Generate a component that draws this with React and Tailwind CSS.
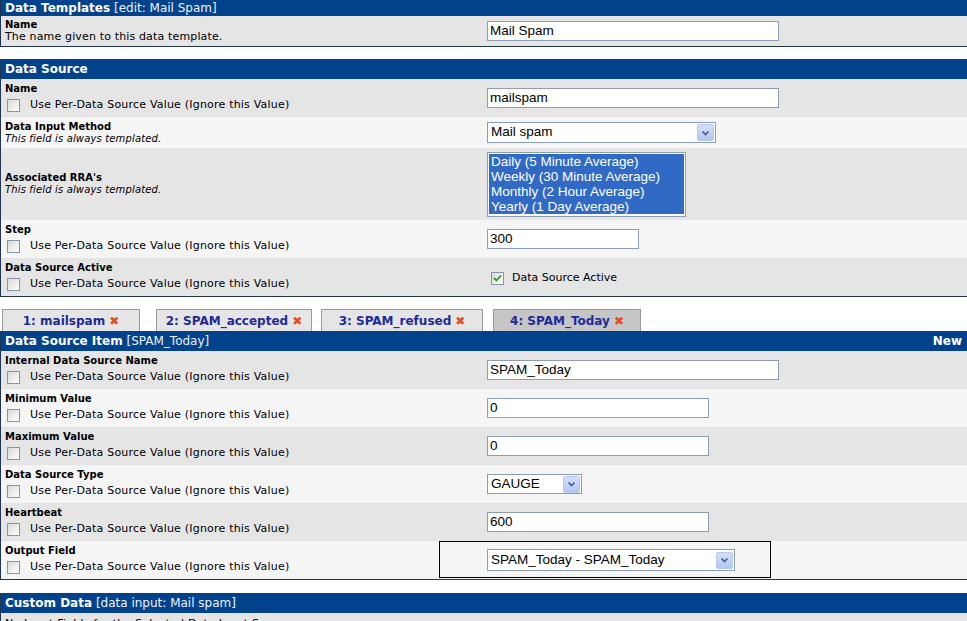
import React from "react";

// Form control font (Windows-ish sans) and label font (Verdana-like)
const CTRL = "font-['Liberation_Sans',Arial,sans-serif] text-[13.5px] text-black";

const Header = ({ title, note, right, tall = true }) => (
    <div className={`${tall ? "h-[20px]" : "h-[16px]"} bg-[#00438c] text-white flex items-center justify-between pl-[4px] pr-[5px] text-[12px] leading-none`}>
        <div className="whitespace-nowrap">
            <span className="font-bold">{title}</span>
            {note && <span className="text-[#eef2f8]"> {note}</span>}
        </div>
        {right && <span className="font-bold">{right}</span>}
    </div>
);

const Check = ({ checked }) => (
    <span className="w-[13px] h-[13px] shrink-0 border border-[#8595a6] bg-gradient-to-br from-[#d9d9d4] to-white flex items-center justify-center">
        {checked && (
            <svg width="9" height="8" viewBox="0 0 9 8">
                <path d="M1 4 L3.5 6.5 L8 1.5" stroke="#21a121" strokeWidth="1.8" fill="none" />
            </svg>
        )}
    </span>
);

const TextBox = ({ w, value }) => (
    <div className={`${w} h-[20px] border border-[#8c9eb5] bg-white flex items-center pl-[2px] ${CTRL}`}>
        {value}
    </div>
);

const Select = ({ w, h = "h-[21px]", value }) => (
    <div className={`${w} ${h} border border-[#8c9eb5] bg-white flex items-center pl-[3px] pr-[1px] ${CTRL}`}>
        <span className="flex-1 whitespace-nowrap">{value}</span>
        <span className="w-[17px] h-[17px] rounded-[2px] border border-[#b5c8f2] bg-gradient-to-b from-[#d3e0fb] to-[#b2c6f4] flex items-center justify-center">
            <svg width="9" height="6" viewBox="0 0 9 6">
                <path d="M1.5 1.5 L4.5 4.5 L7.5 1.5" stroke="#4a5f86" strokeWidth="1.7" fill="none" />
            </svg>
        </span>
    </div>
);

const PerDs = () => (
    <div className="h-[20px] flex items-center pl-[2px]">
        <Check />
        <span className="ml-[10px] text-[11px] tracking-[0.2px] whitespace-nowrap">Use Per-Data Source Value (Ignore this Value)</span>
    </div>
);

const Row = ({ dark, h = "h-[38px]", label, desc, italic = true, perDs = true, children, extra }) => (
    <div className={`relative flex ${h} ${dark ? "bg-[#e5e5e5]" : "bg-[#f5f5f5]"}`}>
        <div className={`w-[482px] shrink-0 pl-[4px] flex flex-col ${perDs ? "pt-[4px]" : "justify-center"}`}>
            <div className="font-bold leading-[12px]">{label}</div>
            {desc && (
                <div className={`${italic ? "italic tracking-[0.15px]" : "text-[11px] tracking-[0.15px]"} leading-[12px] whitespace-nowrap`}>
                    {desc}
                </div>
            )}
            {perDs && <PerDs />}
        </div>
        <div className="flex-1 pl-[4px] flex items-center">{children}</div>
        {extra}
    </div>
);

const Tab = ({ label, w, ml, active }) => (
    <div className={`${w} ${ml} h-[22px] border border-b-0 border-[#9a9a9a] ${active ? "bg-[#c6c6c6]" : "bg-[#e5e5e5]"} flex items-center justify-center text-[12px] font-bold text-[#1f2a96] whitespace-nowrap`}>
        {label}
        <span className="ml-[4px] text-[12px] leading-none text-[#e84a1e]">✖</span>
    </div>
);

const rra = [
    "Daily (5 Minute Average)",
    "Weekly (30 Minute Average)",
    "Monthly (2 Hour Average)",
    "Yearly (1 Day Average)",
];

export default function App() {
    return (
        <div className="w-full h-[621px] overflow-hidden bg-white font-['DejaVu_Sans',Verdana,sans-serif] text-[10px] text-black">

            {/* Data Templates */}
            <div className="border-l border-b border-[#1f3550]">
                <Header title="Data Templates" note="[edit: Mail Spam]" tall={false} />
                <Row dark h="h-[30px]" label="Name" desc="The name given to this data template." italic={false} perDs={false}>
                    <TextBox w="w-[292px]" value="Mail Spam" />
                </Row>
            </div>

            {/* Data Source */}
            <div className="mt-[12px] border-l border-b border-[#1f3550]">
                <Header title="Data Source" />
                <Row dark label="Name">
                    <TextBox w="w-[292px]" value="mailspam" />
                </Row>
                <Row h="h-[31px]" label="Data Input Method" desc="This field is always templated." perDs={false}>
                    <Select w="w-[229px]" value="Mail spam" />
                </Row>
                <Row dark h="h-[72px]" label="Associated RRA's" desc="This field is always templated." perDs={false}>
                    <div className={`w-[199px] h-[65px] border border-[#8c9eb5] bg-white p-[1px] ${CTRL}`}>
                        {rra.map((r) => (
                            <div key={r} className="h-[15px] leading-[15px] bg-[#316ac5] text-white pl-[2px] whitespace-nowrap">{r}</div>
                        ))}
                    </div>
                </Row>
                <Row label="Step">
                    <TextBox w="w-[152px]" value="300" />
                </Row>
                <Row dark label="Data Source Active">
                    <div className="flex items-center pl-[4px] pt-[2px]">
                        <Check checked />
                        <span className="ml-[8px] text-[11px]">Data Source Active</span>
                    </div>
                </Row>
            </div>

            {/* Item tabs */}
            <div className="mt-[12px] flex items-end">
                <Tab label="1: mailspam" w="w-[138px]" ml="ml-[2px]" />
                <Tab label="2: SPAM_accepted" w="w-[156px]" ml="ml-[16px]" />
                <Tab label="3: SPAM_refused" w="w-[162px]" ml="ml-[9px]" />
                <Tab label="4: SPAM_Today" w="w-[148px]" ml="ml-[10px]" active />
            </div>

            {/* Data Source Item */}
            <div className="border-l border-b border-[#1f3550]">
                <Header title="Data Source Item" note="[SPAM_Today]" right="New" />
                <Row dark label="Internal Data Source Name">
                    <TextBox w="w-[292px]" value="SPAM_Today" />
                </Row>
                <Row label="Minimum Value">
                    <TextBox w="w-[222px]" value="0" />
                </Row>
                <Row dark label="Maximum Value">
                    <TextBox w="w-[222px]" value="0" />
                </Row>
                <Row label="Data Source Type">
                    <Select w="w-[95px]" h="h-[20px]" value="GAUGE" />
                </Row>
                <Row dark label="Heartbeat">
                    <TextBox w="w-[222px]" value="600" />
                </Row>
                <Row
                    label="Output Field"
                    extra={<div className="absolute left-[438px] top-0 w-[332px] h-[37px] border border-black pointer-events-none" />}
                >
                    <Select w="w-[248px]" h="h-[22px]" value="SPAM_Today - SPAM_Today" />
                </Row>
            </div>

            {/* Custom Data */}
            <div className="mt-[13px] border-l border-b border-[#1f3550]">
                <Header title="Custom Data" note="[data input: Mail spam]" />
                <div className="h-[24px] bg-[#e5e5e5] pl-[4px] pt-[3px] text-[11px] tracking-[0.2px]">
                    No Input Fields for the Selected Data Input Source
                </div>
            </div>
        </div>
    );
}
